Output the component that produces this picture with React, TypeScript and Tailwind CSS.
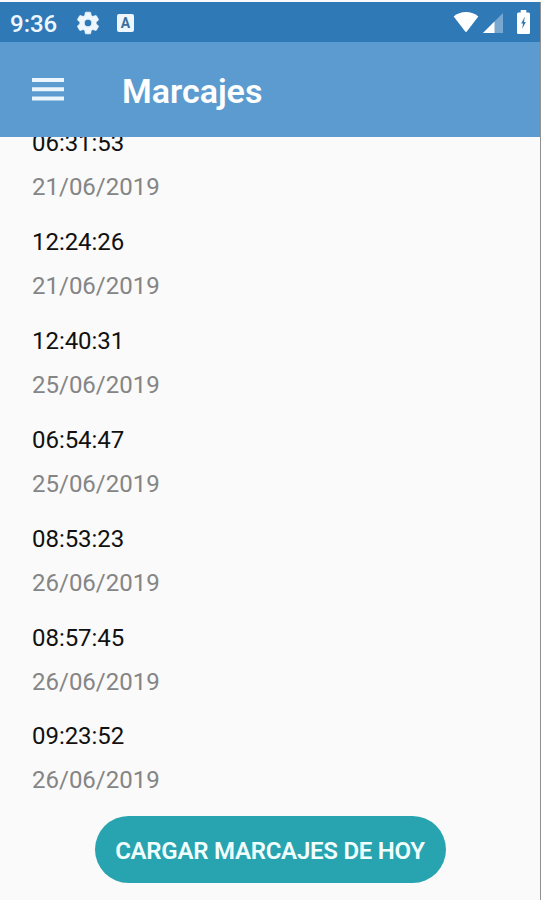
const marks = [
  { time: "06:31:53", date: "21/06/2019" },
  { time: "12:24:26", date: "21/06/2019" },
  { time: "12:40:31", date: "25/06/2019" },
  { time: "06:54:47", date: "25/06/2019" },
  { time: "08:53:23", date: "26/06/2019" },
  { time: "08:57:45", date: "26/06/2019" },
  { time: "09:23:52", date: "26/06/2019" },
];

function StatusBar() {
  return (
    <div className="flex h-10 shrink-0 items-center bg-[#3079b7] pl-[10px] pr-[10px] text-white">
      <span className="w-[47px] whitespace-nowrap pt-[3px] text-[24px] font-medium leading-10 text-[#eef7fd]">9:36</span>
      {/* settings */}
      <svg className="ml-[18px] mt-0.5 size-[26px]" viewBox="0 0 24 24" fill="#eef7fd" stroke="#eef7fd" strokeWidth=".7">
        <path d="M19.43 12.98c.04-.32.07-.64.07-.98s-.03-.66-.07-.98l2.11-1.65c.19-.15.24-.42.12-.64l-2-3.46c-.12-.22-.39-.3-.61-.22l-2.49 1c-.52-.4-1.08-.73-1.69-.98l-.38-2.65C14.46 2.18 14.25 2 14 2h-4c-.25 0-.46.18-.49.42l-.38 2.65c-.61.25-1.17.59-1.69.98l-2.49-1c-.23-.09-.49 0-.61.22l-2 3.46c-.13.22-.07.49.12.64l2.11 1.65c-.04.32-.07.65-.07.98s.03.66.07.98l-2.11 1.65c-.19.15-.24.42-.12.64l2 3.46c.12.22.39.3.61.22l2.49-1c.52.4 1.08.73 1.69.98l.38 2.65c.03.24.24.42.49.42h4c.25 0 .46-.18.49-.42l.38-2.65c.61-.25 1.17-.59 1.69-.98l2.49 1c.23.09.49 0 .61-.22l2-3.46c.12-.22.07-.49-.12-.64l-2.11-1.65zM12 15.5c-1.93 0-3.5-1.57-3.5-3.5s1.57-3.5 3.5-3.5 3.5 1.57 3.5 3.5-1.57 3.5-3.5 3.5z" />
      </svg>
      <span className="ml-4 mt-0.5 flex h-[18px] w-[17px] items-center justify-center rounded-[2px] bg-[#eef7fd] text-[14px] font-bold leading-none text-[#3b6f9f]">
        A
      </span>
      {/* wifi */}
      <svg className="ml-auto h-[22px] w-[26px]" viewBox="0 0 26 22" fill="#fff">
        <path d="M0.7 5.6C3.8 2.5 8.3 1 13 1s9.200 1.500 12.300 4.600L14 20.300q-1 1.200-2 0z" />
      </svg>
      {/* signal */}
      <svg className="ml-[3px] mt-0.5 size-[22px]" viewBox="0 0 22 22">
        <path d="M21 1v20H1z" fill="#fff" fillOpacity=".35" />
        <path d="M12.500 9.500V21H1z" fill="#fff" />
      </svg>
      {/* battery */}
      <svg className="ml-[13px] h-6 w-[13px]" viewBox="0 0 14 24" preserveAspectRatio="none">
        <path d="M4 0h6v2.500h2.500Q14 2.500 14 4v18.500Q14 24 12.500 24h-11Q0 24 0 22.500V4q0-1.500 1.500-1.500H4z" fill="#fff" />
        <path d="M8.500 6.500L4.500 13.500H6.500L5.500 19L9.500 12H7.500z" fill="#3079b7" />
      </svg>
    </div>
  );
}

function AppBar() {
  return (
    <div className="flex h-[95px] shrink-0 items-center bg-[#5c9bcf] pl-8">
      <svg className="h-[23px] w-8" viewBox="0 0 32 23" fill="#eaf5fd">
        <path d="M0 0h32v4H0zM0 9.300h32v4H0zM0 18.600h32v4H0z" />
      </svg>
      <h1 className="ml-[58px] pt-0.5 text-[34px] font-semibold leading-none text-white">Marcajes</h1>
    </div>
  );
}

export default function App() {
  return (
    <div className="h-[900px] w-[541px] overflow-hidden bg-[#fafafa] pt-0.5 font-['Roboto',sans-serif]">
      <div className="flex h-full flex-col border-r border-[#929292]">
        <StatusBar />
        <AppBar />
        {/* the list is scrolled, its first row sits partly under the app bar */}
        <ul className="h-[679px] shrink-0 overflow-hidden pl-8 text-[24px]">
          {marks.map((mark, i) => (
            <li key={i} className="h-[98.85px] first:-mt-[15.6px]">
              <p className="h-11 leading-[44px] tracking-[-0.05px] text-[#111]">{mark.time}</p>
              <p className="h-11 leading-[44px] text-[#858585]">{mark.date}</p>
            </li>
          ))}
        </ul>
        <button className="h-[67px] w-[351px] shrink-0 self-center rounded-full bg-[#28a4b0] pt-0.5 text-[24px] font-semibold tracking-[-0.25px] text-[#f2ffff]">
          CARGAR MARCAJES DE HOY
        </button>
      </div>
    </div>
  );
}
